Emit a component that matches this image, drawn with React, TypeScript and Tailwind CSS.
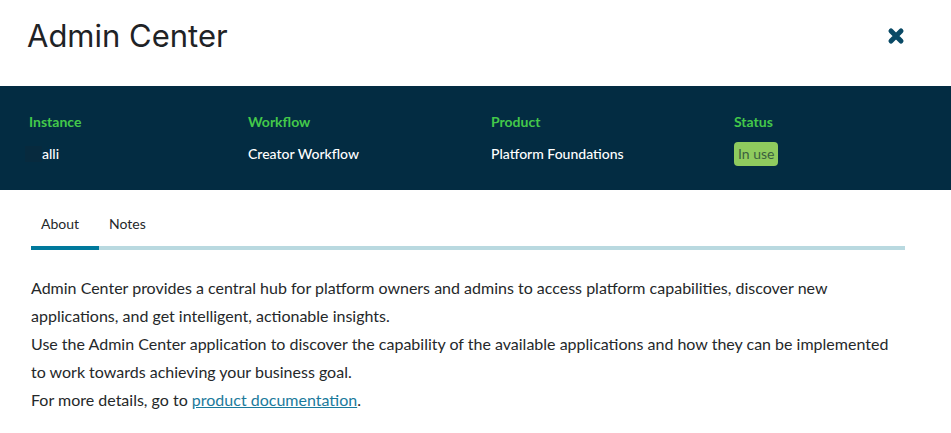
export default function App() {
  return (
    <div className="w-[951px] h-[433px] bg-white overflow-hidden font-['Lato',sans-serif] text-[#25282a]">
      {/* Header */}
      <div className="h-[86px] flex items-center justify-between pb-[14px] pl-[27px] pr-[46px]">
        <h1 className="text-[31px] font-['Inter',sans-serif] font-normal text-[#1f2326]">Admin Center</h1>
        <svg width="18" height="18" viewBox="0 0 18 18" className="text-[#0a4a66]">
          <path d="M4 4 L14 14 M14 4 L4 14" stroke="currentColor" strokeWidth="5" strokeLinecap="round" />
        </svg>
      </div>

      {/* Info band */}
      <div className="h-[104px] bg-[#032c42] pl-[29px] pt-[27px] flex">
        <div className="w-[219px]">
          <div className="text-sm font-bold leading-[18px] text-[#43c84a]">Instance</div>
          <div className="mt-[14px] flex items-center">
            <span className="-ml-[4px] w-[17px] h-[16px] bg-[#072a3e]" />
            <span className="text-sm font-medium leading-[18px] text-white">alli</span>
          </div>
        </div>
        <div className="w-[243px]">
          <div className="text-sm font-bold leading-[18px] text-[#43c84a]">Workflow</div>
          <div className="text-sm font-medium leading-[18px] mt-[14px] text-white">Creator Workflow</div>
        </div>
        <div className="w-[243px]">
          <div className="text-sm font-bold leading-[18px] text-[#43c84a]">Product</div>
          <div className="text-sm font-medium leading-[18px] mt-[14px] text-white">Platform Foundations</div>
        </div>
        <div>
          <div className="text-sm font-bold leading-[18px] text-[#43c84a]">Status</div>
          <div className="mt-[11px] inline-block rounded-[4px] bg-[#8fcb5e] px-[4px] text-sm leading-[24px] text-[#3b5f3f]">In use</div>
        </div>
      </div>

      {/* Tabs */}
      <div className="mx-[31px] mt-[20px] border-b-4 border-[#b9d9e0] flex w-[874px] h-[40px]">
        <div className="w-[68px] h-[40px] flex-none border-b-4 border-[#00799c] pl-[10px] text-sm leading-[28px]">About</div>
        <div className="ml-[10px] text-sm leading-[28px]">Notes</div>
      </div>

      {/* Description */}
      <div className="mx-[31px] mt-[24px] w-[874px] text-base leading-[28px]">
        <p>Admin Center provides a central hub for platform owners and admins to access platform capabilities, discover new applications, and get intelligent, actionable insights.</p>
        <p>Use the Admin Center application to discover the capability of the available applications and how they can be implemented to work towards achieving your business goal.</p>
        <p>For more details, go to <a className="text-[#1b7a9c] underline">product documentation</a>.</p>
      </div>
    </div>
  );
}
